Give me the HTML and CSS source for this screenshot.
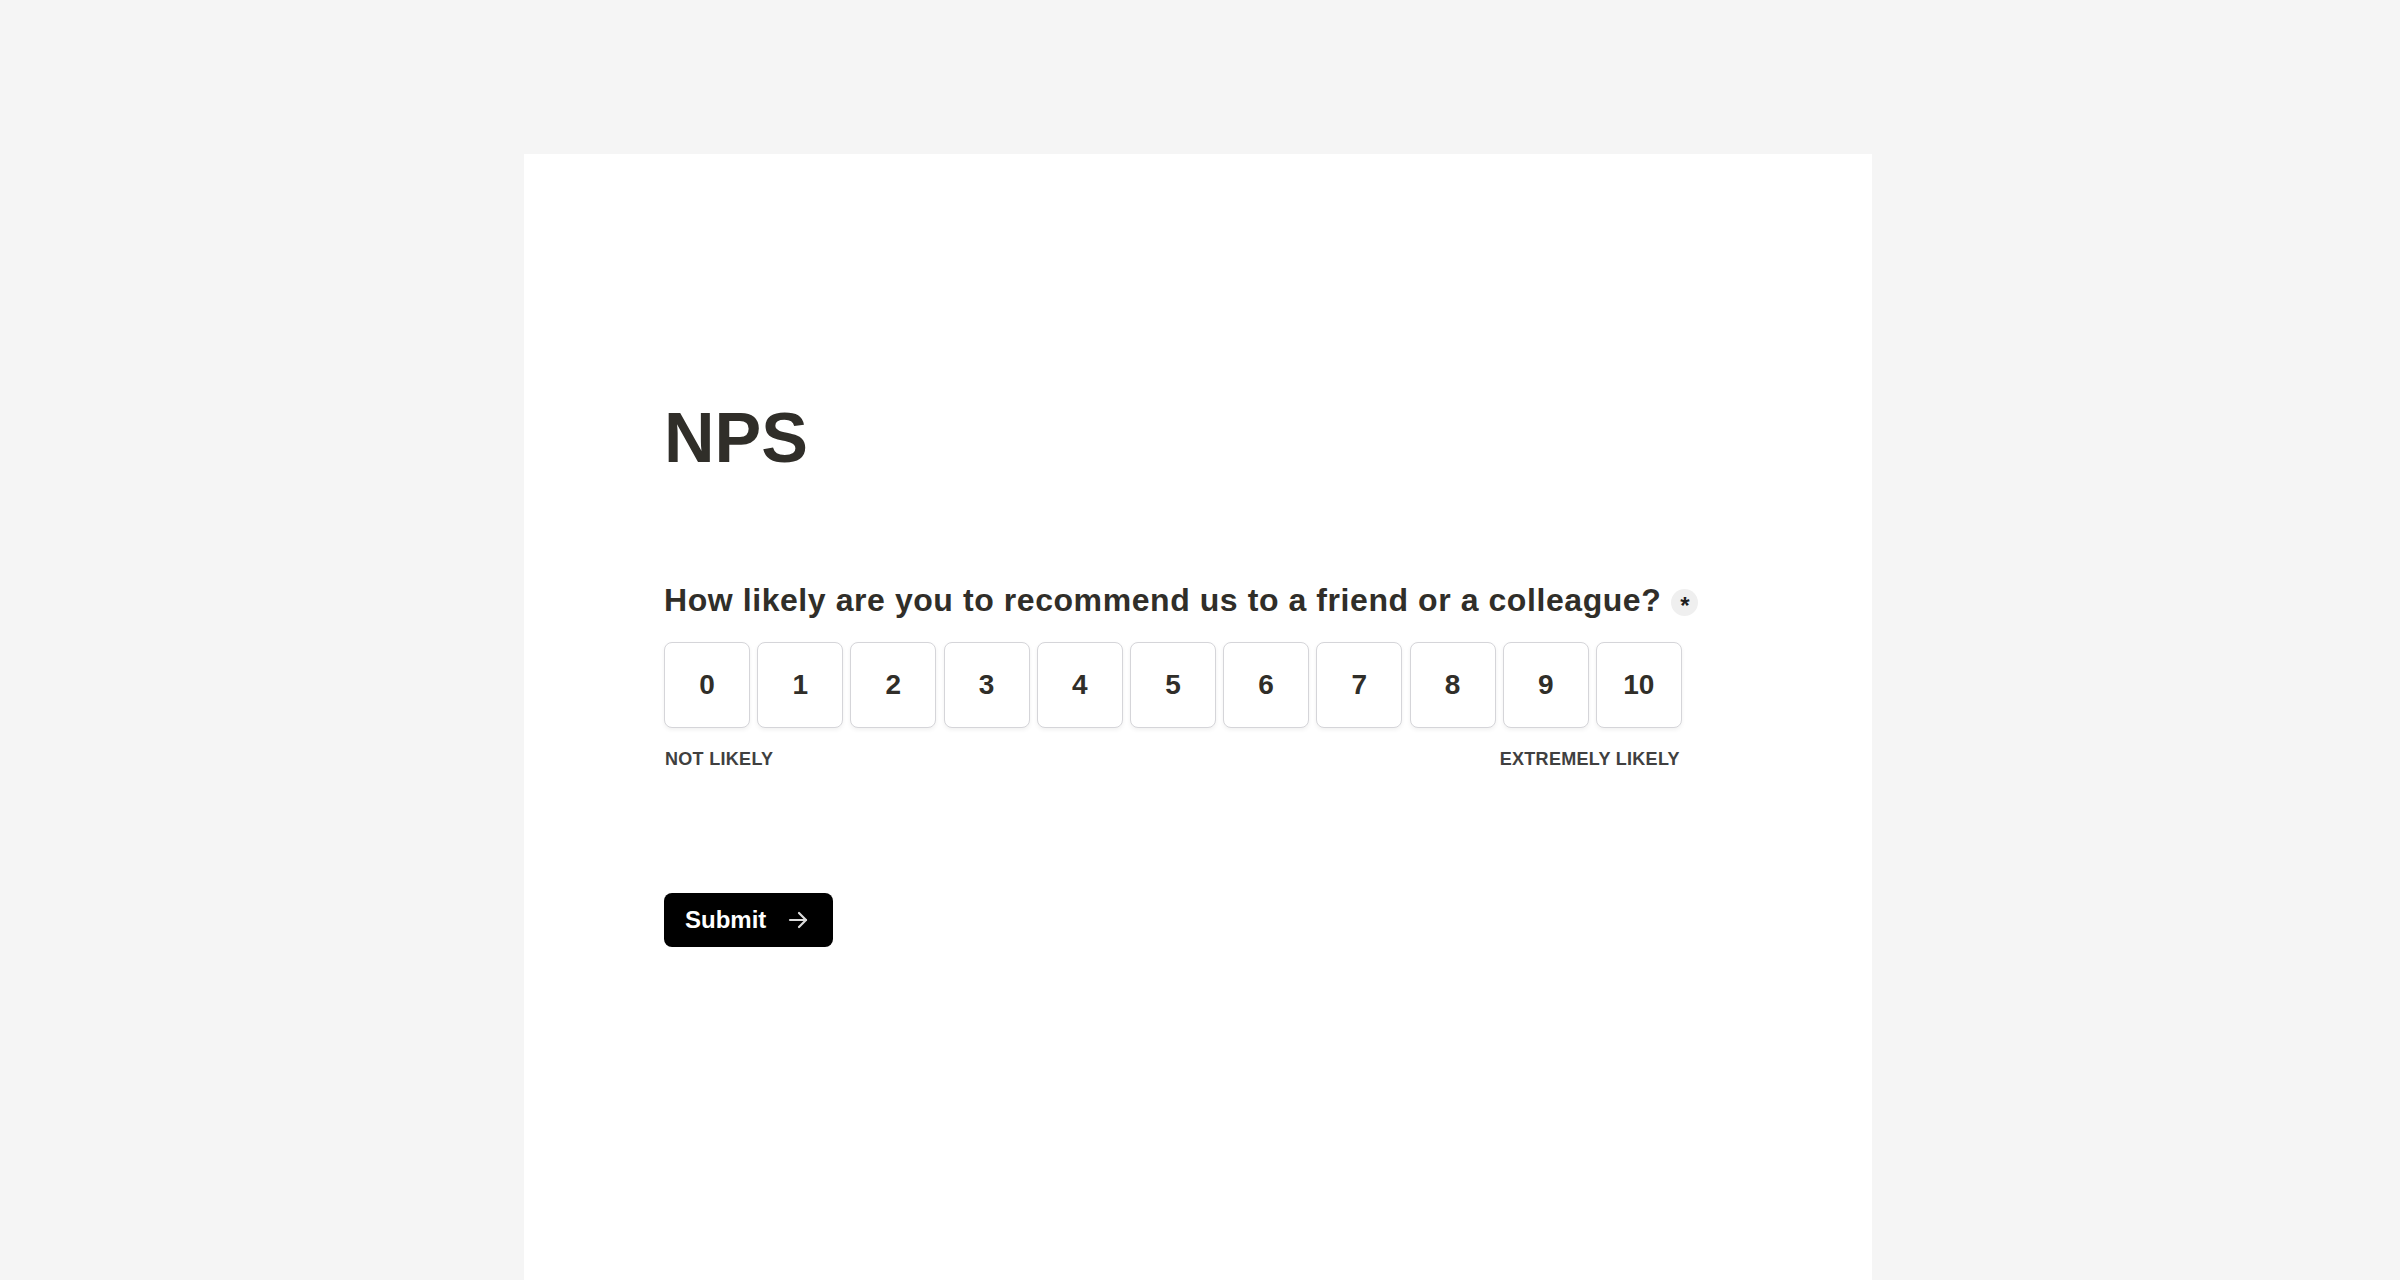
FILE: index.html
```html
<!DOCTYPE html>
<html lang="en">
<head>
<meta charset="utf-8">
<title>NPS</title>
<link rel="stylesheet" href="styles.css">
</head>
<body>
<div class="page">
  <main class="card">
    <h1 class="title">NPS</h1>
    <form class="form">
      <div class="question">
        <span class="question-text">How likely are you to recommend us to a friend or a colleague?</span>
        <span class="required">*</span>
      </div>
      <div class="scale">
        <div class="options">
          <button type="button" class="opt">0</button>
          <button type="button" class="opt">1</button>
          <button type="button" class="opt">2</button>
          <button type="button" class="opt">3</button>
          <button type="button" class="opt">4</button>
          <button type="button" class="opt">5</button>
          <button type="button" class="opt">6</button>
          <button type="button" class="opt">7</button>
          <button type="button" class="opt">8</button>
          <button type="button" class="opt">9</button>
          <button type="button" class="opt">10</button>
        </div>
        <div class="labels">
          <span>NOT LIKELY</span>
          <span>EXTREMELY LIKELY</span>
        </div>
      </div>
      <button type="button" class="submit">
        <span>Submit</span>
        <svg class="arrow" width="20" height="20" viewBox="0 0 20 20" fill="none" stroke="currentColor" stroke-width="2.2" stroke-linecap="round" stroke-linejoin="round"><path d="M2 10h16"/><path d="M11 3l7 7-7 7"/></svg>
      </button>
    </form>
  </main>
</div>
</body>
</html>
```

FILE: styles.css
```css
* { box-sizing: border-box; }
html, body { margin: 0; padding: 0; }
body {
  background: #f5f5f5;
  font-family: "Liberation Sans", Arial, sans-serif;
  color: #302e29;
}
.page {
  display: flex;
  justify-content: center;
  padding-top: 154px;
  padding-right: 4px;
}
.card {
  width: 1348px;
  min-height: 1126px;
  background: #ffffff;
  padding: 242px 140px 0 140px;
}
.title {
  margin: 0;
  font-family: "Liberation Sans", Arial, sans-serif;
  font-size: 70px;
  line-height: 84px;
  font-weight: 700;
  color: #302e29;
}
.form {
  margin-top: 100px;
  display: flex;
  flex-direction: column;
  align-items: flex-start;
}
.question {
  display: flex;
  align-items: center;
  gap: 10px;
  height: 40px;
}
.question-text {
  font-size: 32px;
  line-height: 40px;
  font-weight: 700;
  letter-spacing: 0.57px;
  color: #302e29;
}
.required {
  width: 27px;
  height: 27px;
  border-radius: 50%;
  background: #efefef;
  display: flex;
  align-items: center;
  justify-content: center;
  font-size: 24px;
  font-weight: 700;
  color: #1e1e1e;
  padding-top: 8px;
  margin-top: 4px;
}
.scale {
  margin-top: 22px;
  display: inline-flex;
  flex-direction: column;
}
.options {
  display: flex;
  gap: 7.2px;
}
.opt {
  width: 86px;
  height: 86px;
  border: 1px solid #d5d5d9;
  border-radius: 8px;
  background: #ffffff;
  box-shadow: 0 2px 4px rgba(0, 0, 0, 0.06);
  font-family: "Liberation Sans", Arial, sans-serif;
  font-size: 28px;
  font-weight: 700;
  color: #302e29;
  padding: 0;
  display: flex;
  align-items: center;
  justify-content: center;
}
.labels {
  margin-top: 19px;
  display: flex;
  justify-content: space-between;
  font-size: 18px;
  line-height: 24px;
  font-weight: 700;
  letter-spacing: 0.3px;
  color: #404040;
  padding: 0 2px 0 1px;
}
.submit {
  margin-top: 122px;
  height: 54px;
  width: 169px;
  background: #000000;
  color: #ffffff;
  border: none;
  border-radius: 8px;
  display: flex;
  align-items: center;
  justify-content: flex-start;
  gap: 22px;
  padding: 0 0 0 21px;
  font-family: "Liberation Sans", Arial, sans-serif;
  font-size: 24px;
  font-weight: 700;
}
.arrow { color: #dcdcdc; }
```
